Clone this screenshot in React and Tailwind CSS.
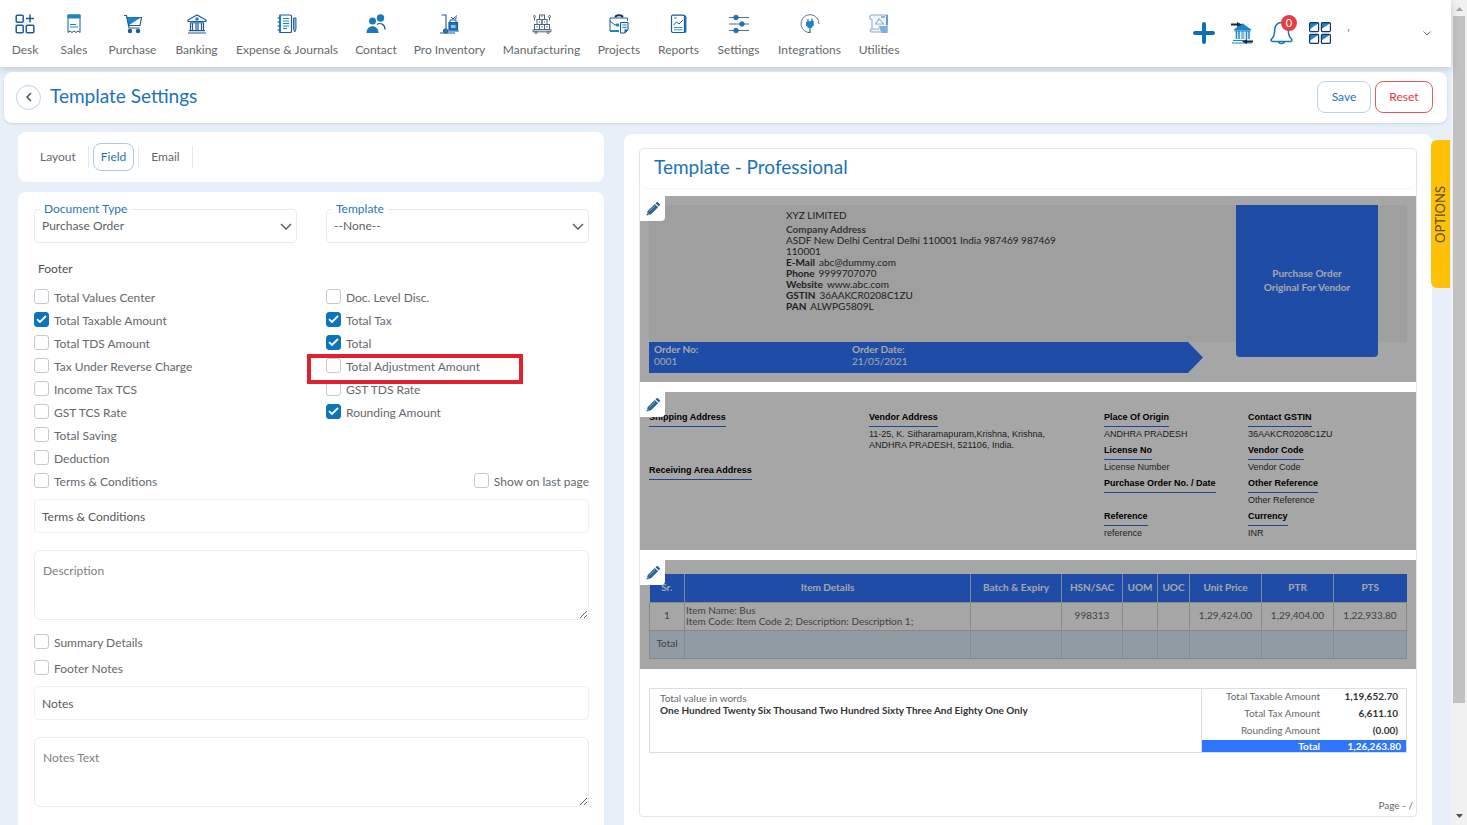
import { useState } from 'react';

const NAV = [
  { label: 'Desk',               icon: DeskIcon,          width: 'w-[48px]' },
  { label: 'Sales',              icon: SalesIcon,         width: 'w-[50px]' },
  { label: 'Purchase',           icon: PurchaseIcon,      width: 'w-[67px]' },
  { label: 'Banking',            icon: BankingIcon,       width: 'w-[61px]' },
  { label: 'Expense & Journals', icon: JournalIcon,       width: 'w-[120px]' },
  { label: 'Contact',            icon: ContactIcon,       width: 'w-[58px]' },
  { label: 'Pro Inventory',      icon: InventoryIcon,     width: 'w-[89px]' },
  { label: 'Manufacturing',      icon: ManufacturingIcon, width: 'w-[95px]' },
  { label: 'Projects',           icon: ProjectsIcon,      width: 'w-[60px]' },
  { label: 'Reports',            icon: ReportsIcon,       width: 'w-[59px]' },
  { label: 'Settings',           icon: SettingsIcon,      width: 'w-[61px]' },
  { label: 'Integrations',       icon: IntegrationsIcon,  width: 'w-[81px]' },
  { label: 'Utilities',          icon: UtilitiesIcon,     width: 'w-[58px]' },
];

const LEFT_FIELDS = [
  'Total Values Center', 'Total Taxable Amount', 'Total TDS Amount', 'Tax Under Reverse Charge',
  'Income Tax TCS', 'GST TCS Rate', 'Total Saving', 'Deduction', 'Terms & Conditions',
];
const RIGHT_FIELDS = [
  'Doc. Level Disc.', 'Total Tax', 'Total', 'Total Adjustment Amount', 'GST TDS Rate', 'Rounding Amount',
];
const HIGHLIGHTED = 'Total Adjustment Amount';

const COMPANY = [
  ['E-Mail', 'abc@dummy.com'],
  ['Phone', '9999707070'],
  ['Website', 'www.abc.com'],
  ['GSTIN', '36AAKCR0208C1ZU'],
  ['PAN', 'ALWPG5809L'],
];

const ORIGIN_INFO = [
  ['Place Of Origin', 'ANDHRA PRADESH'],
  ['License No', 'License Number'],
  ['Purchase Order No. / Date', ''],
  ['Reference', 'reference'],
];
const CONTACT_INFO = [
  ['Contact GSTIN', '36AAKCR0208C1ZU'],
  ['Vendor Code', 'Vendor Code'],
  ['Other Reference', 'Other Reference'],
  ['Currency', 'INR'],
];

const COLUMNS = [
  { name: 'Sr.',            width: 'w-[35px]' },
  { name: 'Item Details',   width: '' },
  { name: 'Batch & Expiry', width: 'w-[91px]' },
  { name: 'HSN/SAC',        width: 'w-[61px]' },
  { name: 'UOM',            width: 'w-[35px]' },
  { name: 'UOC',            width: 'w-[32px]' },
  { name: 'Unit Price',     width: 'w-[72px]' },
  { name: 'PTR',            width: 'w-[72px]' },
  { name: 'PTS',            width: 'w-[73px]' },
];

const SUMMARY = [
  ['Total Taxable Amount', '1,19,652.70'],
  ['Total Tax Amount', '6,611.10'],
  ['Rounding Amount', '(0.00)'],
];

export default function App() {
  return (
    <div className="flex h-screen overflow-hidden bg-[#e7f0f8] font-[Lato,sans-serif] text-xs text-[#64686c]">
      <div className="relative flex min-w-0 flex-1 flex-col">
        <Header />
        <TitleBar />
        <main className="grid min-h-0 flex-1 grid-cols-[586fr_808fr] gap-5 pr-[19px] pl-[18px] pt-[9px]">
          <div className="flex min-h-0 flex-col gap-[10px]">
            <Tabs />
            <FieldForm />
          </div>
          <Preview />
        </main>
        <button type="button"
          className="absolute top-[140px] right-[1px] flex h-[148px] w-[19px] items-center justify-center rounded-l-md bg-[#ffc107] text-[13px] text-[#5c5230]">
          <span className="rotate-180 [writing-mode:vertical-rl]">OPTIONS</span>
        </button>
      </div>
      <ScrollBar />
    </div>
  );
}

function Header() {
  return (
    <header className="flex h-[67px] shrink-0 items-start bg-white pl-px shadow-[0_2px_8px_rgba(90,110,120,0.3)]">
      <nav className="flex">
        {NAV.map(({ label, icon: Icon, width }) => (
          <a key={label} href="#" className={`flex flex-col items-center gap-2 pt-[14px] whitespace-nowrap ${width}`}>
            <Icon />
            <span className="leading-[15px]">{label}</span>
          </a>
        ))}
      </nav>
      <div className="ml-auto flex h-[66px] items-center gap-4 pr-5">
        <button type="button" aria-label="Add">
          <svg width="22" height="22" viewBox="0 0 22 22" stroke="#0f6fb4" strokeWidth="4" strokeLinecap="round">
            <path d="M11 2v18M2 11h18" />
          </svg>
        </button>
        <button type="button" aria-label="Bank transfer"><TransferIcon /></button>
        <button type="button" aria-label="Notifications" className="relative">
          <svg width="23" height="24" viewBox="0 0 23 24" fill="none" stroke="#1673b5" strokeWidth="1.5" strokeLinecap="round" strokeLinejoin="round">
            <path d="M11.500 1.500c-4.500 0-6.800 3.300-6.800 7.200 0 5-1 7.300-3.200 9.300-.8.900-.5 2.500 1 2.500h18c1.500 0 1.800-1.600 1-2.500-2.200-2-3.200-4.300-3.200-9.300 0-3.900-2.300-7.200-6.800-7.200z" />
            <path d="M8.500 20.800c.6 2.400 5.400 2.400 6 0" />
          </svg>
          <span className="absolute -top-[6px] left-[11px] flex h-4 w-4 items-center justify-center rounded-full bg-[#e53f42] text-[11px] text-white">0</span>
        </button>
        <button type="button" aria-label="Apps">
          <svg width="22" height="22" viewBox="0 0 22 22" fill="none" stroke="#1a3560" strokeWidth="1.200">
            <path d="M1 1h9L1 7zM12.500 1h9l-9 6zM1 12.500h9l-9 6zM12.500 12.500h9l-9 6z" fill="#1a86c8" stroke="none" />
            <rect x=".6" y=".6" width="9" height="9" rx="1" />
            <rect x="12.400" y=".6" width="9" height="9" rx="1" />
            <rect x=".6" y="12.400" width="9" height="9" rx="1" />
            <rect x="12.400" y="12.400" width="9" height="9" rx="1" />
          </svg>
        </button>
        <button type="button" aria-label="Account" className="flex w-[84px] items-center justify-between">
          <i className="text-[11px]">&#39;</i>
          <svg width="8" height="5" viewBox="0 0 8 5" fill="none" stroke="#6b6b6b">
            <path d="M.5.500 4 4 7.500.500" />
          </svg>
        </button>
      </div>
    </header>
  );
}

function TitleBar() {
  return (
    <div className="mx-1 mt-[5px] flex h-[51px] shrink-0 items-center rounded-lg bg-white pr-[14px] pb-px pl-3 shadow-sm">
      <button type="button" aria-label="Back"
        className="flex h-[25px] w-[25px] items-center justify-center rounded-full border border-[#bcd3ea]">
        <svg width="6" height="10" viewBox="0 0 6 10" fill="none" stroke="#444" strokeWidth="1.400"><path d="M5 1 1 5l4 4" /></svg>
      </button>
      <h1 className="ml-[9px] pb-[2px] text-[19px] leading-6 text-[#1a73b8]">Template Settings</h1>
      <div className="ml-auto flex gap-1">
        <button type="button" className="h-8 w-[54px] rounded-lg border border-[#b5d3ea] text-[#1a73b8]">Save</button>
        <button type="button" className="h-8 w-[58px] rounded-lg border border-[#e25a5f] text-[#e2383f]">Reset</button>
      </div>
    </div>
  );
}

function Tabs() {
  const [active, setActive] = useState('Field');
  return (
    <div className="flex h-[50px] shrink-0 items-center rounded-lg bg-white pl-[10px]">
      {['Layout', 'Field', 'Email'].map(tab => (
        <div key={tab} className="flex items-center border-r border-[#e3e8ec] pr-1">
          <button type="button" onClick={() => setActive(tab)}
            className={`-my-[3px] ml-1 h-7 rounded-lg border px-[7px] ${
              active === tab ? 'border-[#a9cbe6] text-[#1a73b8]' : 'border-transparent'
            }`}>
            {tab}
          </button>
        </div>
      ))}
    </div>
  );
}

function FieldForm() {
  const [checked, setChecked] = useState({ 'Total Taxable Amount': true, 'Total Tax': true, 'Total': true, 'Rounding Amount': true });
  const toggle = name => setChecked(prev => ({ ...prev, [name]: !prev[name] }));

  return (
    <form className="min-h-0 flex-1 overflow-hidden rounded-t-lg bg-white pt-[17px] pr-[15px] pl-4">
      <div className="grid grid-cols-2 gap-x-[29px]">
        <SelectField id="docType" label="Document Type" options={['Purchase Order', 'Sales Order']} />
        <SelectField id="template" label="Template" options={['--None--', 'Professional']} />
      </div>

      <h2 className="mt-4 ml-1 leading-5 text-[#4b4f53]">Footer</h2>

      <div className="mt-[7px] grid grid-cols-2 gap-x-[29px]">
        <div>
          {LEFT_FIELDS.map(name => (
            <CheckField key={name} name={name} checked={!!checked[name]} onChange={() => toggle(name)} />
          ))}
        </div>
        <div className="flex flex-col">
          {RIGHT_FIELDS.map(name => (
            <CheckField key={name} name={name} checked={!!checked[name]} onChange={() => toggle(name)} />
          ))}
          <div className="mt-auto self-end">
            <CheckField name="Show on last page" checked={!!checked['Show on last page']} onChange={() => toggle('Show on last page')} />
          </div>
        </div>
      </div>

      <TextField label="Terms & Conditions" />
      <TextArea label="Description" />
      <div className="mt-[11px] flex flex-col gap-[3px]">
        <CheckField name="Summary Details" checked={!!checked['Summary Details']} onChange={() => toggle('Summary Details')} />
        <CheckField name="Footer Notes" checked={!!checked['Footer Notes']} onChange={() => toggle('Footer Notes')} />
      </div>
      <TextField label="Notes" />
      <TextArea label="Notes Text" />
    </form>
  );
}

function SelectField({ id, label, options }) {
  return (
    <div className="relative">
      <label htmlFor={id} className="absolute -top-2 left-[6px] bg-white px-1 leading-4 text-[#2a75b5]">{label}</label>
      <select id={id} className="h-[34px] w-full appearance-none rounded border border-[#e8eaec] bg-white px-[7px] text-[#5b5f63]">
        {options.map(o => <option key={o}>{o}</option>)}
      </select>
      <svg className="pointer-events-none absolute top-[14px] right-[5px]" width="12" height="7" viewBox="0 0 12 7" fill="none" stroke="#555" strokeWidth="1.300">
        <path d="M1 1l5 5 5-5" />
      </svg>
    </div>
  );
}

function CheckField({ name, checked, onChange }) {
  return (
    <label className="relative flex h-[23px] items-center gap-[5px] whitespace-nowrap">
      <span className="relative mb-[2px] flex h-[15px] w-[15px] shrink-0">
        <input type="checkbox" checked={checked} onChange={onChange}
          className="h-[15px] w-[15px] appearance-none rounded-[3px] border border-[#c3cad2] bg-white checked:border-[#0b74bb] checked:bg-[#0b74bb]" />
        {checked && (
          <svg className="pointer-events-none absolute top-[3px] left-[2px]" width="11" height="9" viewBox="0 0 11 9" fill="none" stroke="#fff" strokeWidth="1.800">
            <path d="M1 4.200 4 7l6-6" />
          </svg>
        )}
      </span>
      <span>{name}</span>
      {name === HIGHLIGHTED && (
        <span className="pointer-events-none absolute -top-px -left-[19px] z-10 h-[30px] w-[216px] border-4 border-[#e3202b]" />
      )}
    </label>
  );
}

function TextField({ label }) {
  return (
    <input type="text" aria-label={label} defaultValue={label}
      className="mt-[6px] block h-[34px] w-full rounded border border-[#eef0f2] px-[7px] text-[#55595d]" />
  );
}

function TextArea({ label }) {
  return (
    <textarea aria-label={label} placeholder={label}
      className="mt-[17px] block h-[70px] w-full rounded-md border border-[#eaecee] px-2 py-3 leading-4 placeholder:text-[#7b8085]" />
  );
}

function Preview() {
  return (
    <section className="mt-[2px] min-h-0 overflow-hidden rounded-t-lg bg-white px-[15px] pt-[14px] text-[10px]">
      <div className="flex h-[669px] flex-col rounded border border-[#e4e6e8]">
        <h2 className="h-[39px] rounded-lg pl-[14px] text-[19px] leading-[36px] text-[#1a73b8] shadow-[0_1px_3px_rgba(0,0,0,0.05)]">
          Template - Professional
        </h2>

        <PreviewBlock className="mt-2 h-[186px] px-[9px] pt-[9px]">
          <div className="flex h-[137px] bg-[#f4f4f4] text-[#333]">
            <div className="ml-[137px] w-[290px] pt-[5px] leading-[11px]">
              <div className="mb-[3px]">XYZ LIMITED</div>
              <div className="font-bold text-[#555]">Company Address</div>
              <div>ASDF New Delhi Central Delhi 110001 India 987469 987469 110001</div>
              {COMPANY.map(([k, v]) => (
                <div key={k}><b className="mr-1 font-bold">{k}</b>{v}</div>
              ))}
            </div>
            <div className="mr-[29px] ml-auto flex h-[152px] w-[142px] flex-col items-center justify-center rounded-b bg-[#2f76ff] pb-[2px] leading-[14px] font-bold text-white">
              <span>Purchase Order</span>
              <span>Original For Vendor</span>
            </div>
          </div>
          <div className="flex h-[31px] w-[554px] bg-[#2f76ff] px-[5px] pt-px leading-[12px] text-white [clip-path:polygon(0_0,539px_0,100%_50%,539px_100%,0_100%)]">
            <div className="w-[198px]"><b>Order No:</b><br />0001</div>
            <div><b>Order Date:</b><br />21/05/2021</div>
          </div>
        </PreviewBlock>

        <PreviewBlock className="mt-[10px] h-[158px] font-['Liberation_Sans',Arial,sans-serif] text-[9px] text-[#333]">
          <div className="flex pt-[18px] pl-[9px] leading-[11px]">
            <div className="w-[220px]">
              <div className="h-[53px]"><InfoTitle>Shipping Address</InfoTitle></div>
              <InfoTitle>Receiving Area Address</InfoTitle>
            </div>
            <div className="flex-1">
              <InfoTitle>Vendor Address</InfoTitle>
              <p className="mt-[2px]">11-25, K. Sitharamapuram,Krishna, Krishna,<br />ANDHRA PRADESH, 521106, India.</p>
            </div>
            <div className="w-[144px]"><InfoList items={ORIGIN_INFO} /></div>
            <div className="w-[168px]"><InfoList items={CONTACT_INFO} /></div>
          </div>
        </PreviewBlock>

        <PreviewBlock className="mt-[10px] h-[109px] px-[9px] pt-[14px]">
          <table className="w-full table-fixed border-collapse text-center">
            <thead>
              <tr className="h-7 bg-[#2f76ff] text-white">
                {COLUMNS.map(c => (
                  <th key={c.name} className={`border-r border-[#bfcfe8] p-0 font-bold last:border-r-0 ${c.width}`}>{c.name}</th>
                ))}
              </tr>
            </thead>
            <tbody>
              <tr className="h-7 [&>td]:border [&>td]:border-[#d6d2cb]">
                <td>1</td>
                <td className="pl-px text-left leading-[11px]">Item Name: Bus<br />Item Code: Item Code 2; Description: Description 1;</td>
                <td />
                <td>998313</td>
                <td />
                <td />
                <td>1,29,424.00</td>
                <td>1,29,404.00</td>
                <td>1,22,933.80</td>
              </tr>
              <tr className="h-7 bg-[#dfeefa] [&>td]:border [&>td]:border-[#cad8e2]">
                <td>Total</td>
                <td /><td /><td /><td /><td /><td /><td /><td />
              </tr>
            </tbody>
          </table>
        </PreviewBlock>

        <div className="mx-[9px] mt-[19px] flex h-[65px] border border-[#dcdfe2]">
          <div className="flex-1 border-r border-[#dcdfe2] pt-[3px] pl-[10px] leading-3">
            Total value in words<br />
            <b className="text-[#333]">One Hundred Twenty Six Thousand Two Hundred Sixty Three And Eighty One Only</b>
          </div>
          <table className="w-[204px] text-right">
            <tbody>
              {SUMMARY.map(([k, v]) => (
                <tr key={k} className="h-[17px]">
                  <td className="w-[118px] p-0 pb-px">{k}</td>
                  <td className="pt-0 pr-2 pb-px pl-0 font-bold text-[#333]">{v}</td>
                </tr>
              ))}
              <tr className="h-3 bg-[#2f76ff] leading-3 font-bold text-white">
                <td className="p-0">Total</td>
                <td className="py-0 pr-[5px] pl-0">1,26,263.80</td>
              </tr>
            </tbody>
          </table>
        </div>

        <div className="mt-auto pr-[3px] pb-[5px] text-right leading-3">Page - /</div>
      </div>
    </section>
  );
}

// Dimmed block of the document with its edit button
function PreviewBlock({ className, children }) {
  return (
    <div className={`relative shrink-0 ${className}`}>
      {children}
      <div className="absolute inset-0 bg-black/35" />
      <button type="button" aria-label="Edit block"
        className="absolute top-0 left-0 flex h-[25px] w-[25px] items-center justify-center rounded-br bg-white">
        <svg width="14" height="14" viewBox="0 0 14 14" fill="#2a6496">
          <path d="M8.800 1.900 12.100 5.200 5 12.300.800 13.500.500 13.200 1.700 9z" />
          <path d="M9.500 1.200 10.500.300c.5-.4 1-.4 1.400 0l1.800 1.800c.4.400.4 1 0 1.400l-.9 1z" />
          <path d="M3.400 9.400l5.600-5.600" stroke="#bcd4e8" strokeWidth=".6" />
          <path d="M1.700 11.300l1 1" stroke="#fff" strokeWidth="1" />
        </svg>
      </button>
    </div>
  );
}

function InfoTitle({ children }) {
  return <div className="w-fit border-b border-[#2f6fe0] pt-[2px] pb-[3px] font-bold text-black">{children}</div>;
}

function InfoList({ items }) {
  return items.map(([title, value]) => (
    <div key={title} className="h-[33px]">
      <InfoTitle>{title}</InfoTitle>
      <div className="mt-[2px]">{value}</div>
    </div>
  ));
}

function ScrollBar() {
  return (
    <div className="flex w-4 shrink-0 flex-col items-center bg-[#f1f1f1]">
      <svg className="mt-[7px] shrink-0" width="7" height="4" viewBox="0 0 7 4" fill="#a3a3a3"><path d="M0 4 3.500 0 7 4z" /></svg>
      <div className="mt-[5px] flex-1 self-stretch px-[2px]">
        <div className="h-[87%] bg-[#c1c1c1]" />
      </div>
      <svg className="mt-2 mb-[7px] shrink-0" width="7" height="4" viewBox="0 0 7 4" fill="#505050"><path d="M0 0 3.500 4 7 0z" /></svg>
    </div>
  );
}

/* ---- Icons ---- */

function Icon({ children }) {
  return (
    <svg width="20" height="20" viewBox="0 0 20 20" fill="none" stroke="#1f5a94" strokeWidth="1.200">
      {children}
    </svg>
  );
}

function DeskIcon() {
  return (
    <Icon>
      <g strokeWidth="1.500">
        <rect x="1.200" y="1.200" width="7" height="7" rx="1" />
        <rect x="1.200" y="11.200" width="7" height="7.500" rx="1" />
        <rect x="11.300" y="11.200" width="7.500" height="7.500" rx="1" />
        <path d="M15 .5v8M11 4.500h8" />
      </g>
    </Icon>
  );
}

function SalesIcon() {
  return (
    <Icon>
      <path d="M4 1h12v17.500l-2-1.500-2 1.500-2-1.500-2 1.500L6 17l-2 1.500z" strokeWidth="1" />
      <path d="M3.500.500h13v4h-13z" fill="#1a86c8" stroke="none" />
      <path d="M6 10.500h6M6 13h8" stroke="#1a86c8" strokeWidth="1" />
    </Icon>
  );
}

function PurchaseIcon() {
  return (
    <Icon>
      <path d="M1 1.500h2.500L6 14h10.500" />
      <path d="M4 3.500h14.500l-1.500 8H6z" />
      <path d="M4 3.500h14L6 11z" fill="#1a86c8" stroke="none" />
      <circle cx="7" cy="17" r="1.600" fill="#1d5c9e" />
      <circle cx="15" cy="17" r="1.600" fill="#1d5c9e" />
    </Icon>
  );
}

function BankingIcon() {
  return (
    <Icon>
      <path d="M1 7.500V6l9-5 9 5v1.500z" />
      <circle cx="10" cy="5" r="1.800" fill="#1a86c8" stroke="none" />
      <path d="M3.500 9v7M5.500 9v7M9 9v7M11 9v7M14.500 9v7M16.500 9v7" />
      <path d="M3 8.800h14" stroke="#1a86c8" />
      <path d="M2 16.700h16M1 19h18" />
    </Icon>
  );
}

function JournalIcon() {
  return (
    <Icon>
      <rect x="2.500" y="1" width="12" height="17.500" rx="1" />
      <path d="M3 1v17.500" stroke="#1a86c8" strokeWidth="2" />
      <path d="M.5 4h3M.5 8h3M.5 12h3M.5 16h3" strokeWidth="1" />
      <path d="M6 4.500h6M6 7h6M6 9.500h6M6 12h6M6 14.500h4" stroke="#1a86c8" strokeWidth="1" />
      <path d="M16.500 4h2.500v11l-1.200 3-1.300-3z" fill="#8bbbe0" strokeWidth=".9" />
    </Icon>
  );
}

function ContactIcon() {
  return (
    <Icon>
      <g fill="#1a78bd" stroke="none">
        <circle cx="14.500" cy="4" r="3.700" />
        <circle cx="6.500" cy="7" r="3.500" />
        <path d="M.5 19c0-9 12-9 12 0z" />
      </g>
      <path d="M11 10.500c3-2.200 8-.5 8 5" />
    </Icon>
  );
}

function InventoryIcon() {
  return (
    <Icon>
      <path d="M1.500 1H6v15M0 19h15M8 17h11" strokeWidth="1.100" />
      <circle cx="5.500" cy="17" r="2" fill="#1a86c8" />
      <path d="M9 8.500h8.500v7.500H9z" fill="#1a78bd" />
      <path d="M10 8.500V6h6v2.500M11 3l2 2M13 5l4-3.500M14.500 5.500 17 3.500" strokeWidth="1" />
      <path d="M11 11h4.500v3H11z" fill="#8cc3ea" stroke="none" />
    </Icon>
  );
}

function ManufacturingIcon() {
  return (
    <Icon>
      <g stroke="#4a6583" strokeWidth="1">
        <rect x="7.500" y="1" width="5" height="4.500" />
        <rect x="5" y="5.500" width="5" height="5" />
        <rect x="10" y="5.500" width="5" height="5" />
        <rect x="2.500" y="10.500" width="5" height="5" />
        <rect x="7.500" y="10.500" width="5" height="5" />
        <rect x="12.500" y="10.500" width="5" height="5" />
        <path d="M1 15.800h18v2H1zM2.500 3v3.500M17.500 3v3.500M7.500 7.500v1M12.500 7.500v1M5 12v1.500M10 12v1.500M15 12v1.500M10 1.500v1.500" />
        <circle cx="2.500" cy="2.500" r="1" />
        <circle cx="17.500" cy="2.500" r="1" />
        <circle cx="4" cy="18.500" r="1" />
        <circle cx="16" cy="18.500" r="1" />
      </g>
    </Icon>
  );
}

function ProjectsIcon() {
  return (
    <Icon>
      <path d="M6.500 3.500c0-3 7-3 7 0" stroke="#16325c" strokeWidth="2" />
      <path d="M18.500 7V4H1v13h9" strokeWidth="1" />
      <path d="M1 7l5 4h4" strokeWidth="1" />
      <circle cx="8.500" cy="11" r="1.800" fill="#1a86c8" stroke="none" />
      <path d="M1 17h9" stroke="#1a86c8" strokeWidth="2" />
      <path d="M11.500 8.500H19V16l-3 3h-4.500z" fill="#eaf4fc" strokeWidth="1" />
      <path d="M13.500 11h4M13.500 13.500h4" stroke="#1a86c8" strokeWidth="1" />
      <path d="M19 15.500h-3.500V19z" fill="#1d5c9e" stroke="none" />
    </Icon>
  );
}

function ReportsIcon() {
  return (
    <Icon>
      <path d="M14.500 1c2.500 0 3 .8 3 2.800V17c0 1.500-.8 2-2.300 2z" fill="#1a78bd" stroke="none" />
      <rect x="2.500" y="1.200" width="13" height="17.300" rx="1.500" fill="#fff" />
      <path d="M4.500 11 7.500 8l2.500 2 4-4" strokeWidth="1" />
      <path d="M5 13.500h8.500M5 15.800h8.500M5 4h3" stroke="#1a86c8" strokeWidth=".9" />
    </Icon>
  );
}

function SettingsIcon() {
  return (
    <Icon>
      <path d="M0 3.500h20M0 10h20M0 16.500h20" stroke="#4f6f9c" strokeWidth="1.100" />
      <g fill="#1a78bd" strokeWidth=".8">
        <circle cx="7" cy="3.500" r="2.300" />
        <circle cx="13" cy="10" r="2.300" />
        <circle cx="7" cy="16.500" r="2.300" />
      </g>
    </Icon>
  );
}

function IntegrationsIcon() {
  return (
    <Icon>
      <path d="M7.500 18.300A9 9 0 1 1 19 10" stroke="#5a7699" strokeWidth="1" />
      <path d="M6 8l7.500-1.500.5 4.500-2.500 3H8.500L6 11.500z" fill="#1a86c8" stroke="none" />
      <path d="M8 5v3.500M12 4.500V8M10 14v4.500l-2.500-.2" strokeWidth="1.100" />
    </Icon>
  );
}

function UtilitiesIcon() {
  return (
    <Icon>
      <g stroke="#8aaed2" strokeWidth="1.100">
        <path d="M3 1h15v17H3c-2.500 0-2.500-3 0-3h7" fill="#eef5fb" />
        <path d="M3 1C0 1 0 5.500 3 5.500V15" />
        <path d="M6.500 10 10 5l4.500 5z" fill="#fff" />
        <path d="M12 3h4M18 1v10" stroke="#2c6cab" />
        <path d="M10.500 12.500h7.500V18.500h-5z" fill="#6cb4e2" />
      </g>
    </Icon>
  );
}

function TransferIcon() {
  return (
    <svg width="23" height="22" viewBox="0 0 23 22" fill="none" stroke="#1a86c8" strokeWidth="1.200">
      <path d="M4 7.500 11.500 2 19 7.500z" fill="#1a86c8" />
      <path d="M5.500 9v8M8 9v8M15.500 9v8M18 9v8" strokeWidth="1.500" />
      <path d="M10 9h3.500v8H10z" fill="#7fbfe8" stroke="none" />
      <path d="M3.500 8.800h16M2 18.500h11M1 21h20" />
      <path d="M0 1.500h6V0l5 2.500L6 5V3.500H0zM22 18.500h-6V17l-5 2.500 5 2.500v-1.500h6z" fill="#14284f" stroke="none" />
    </svg>
  );
}
